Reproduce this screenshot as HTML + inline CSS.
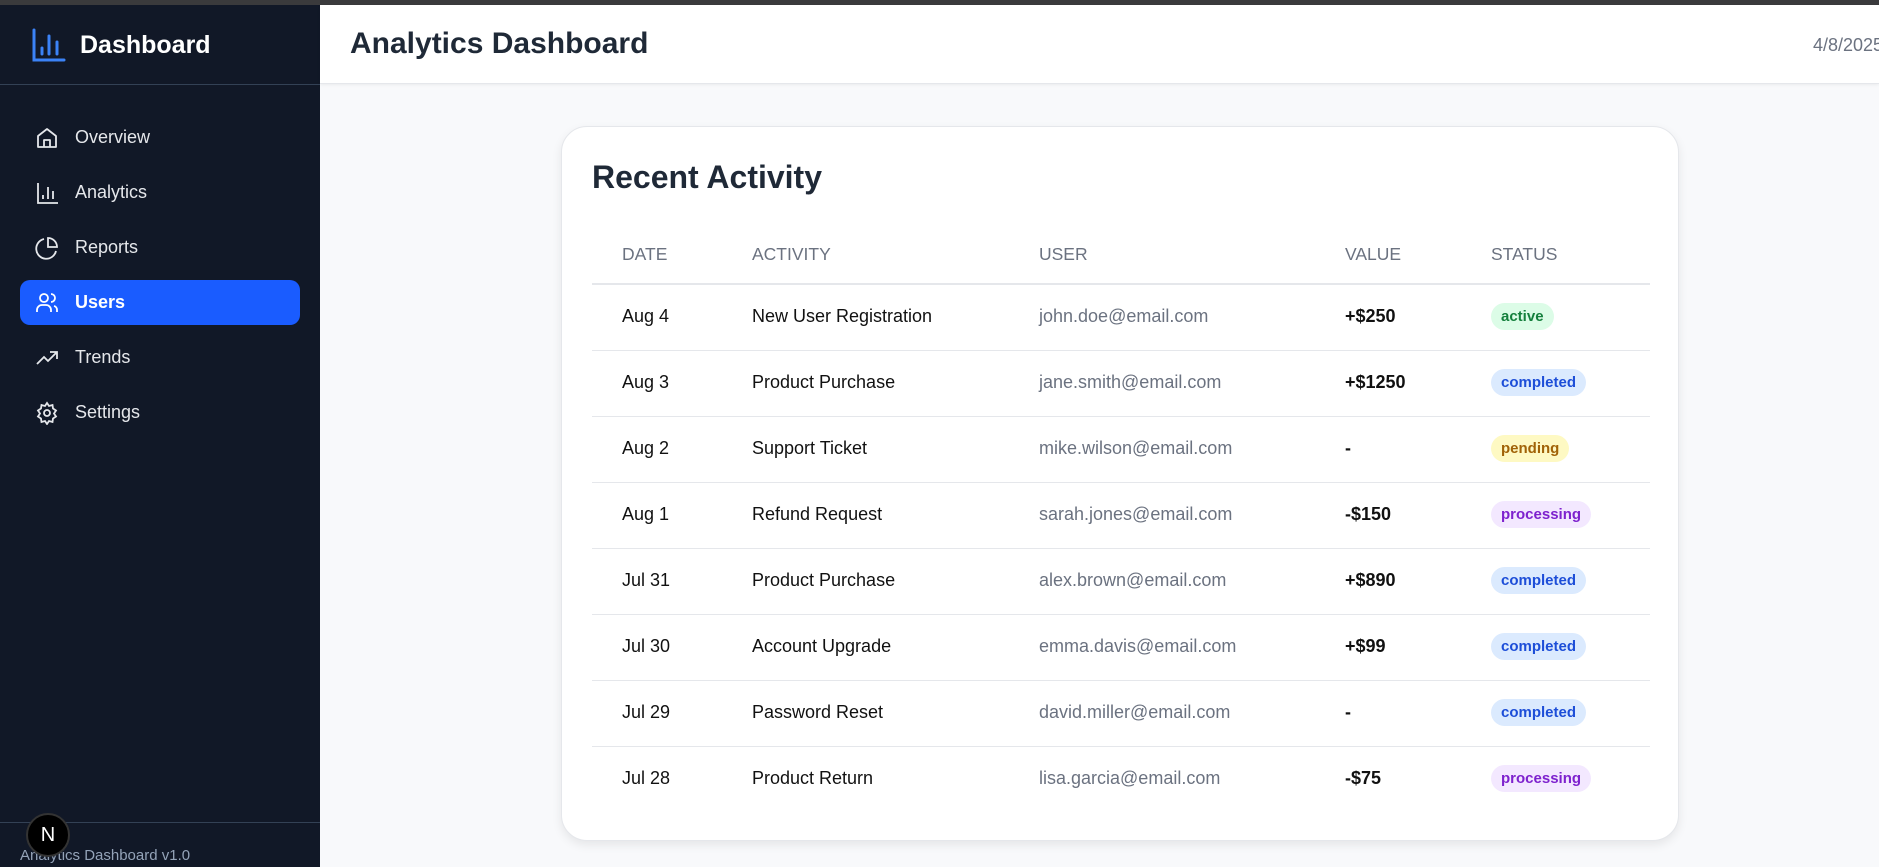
<!DOCTYPE html>
<html><head><meta charset="utf-8"><style>
*{box-sizing:border-box;margin:0;padding:0}
body{width:1879px;height:867px;overflow:hidden;font-family:"Liberation Sans",Arial,sans-serif;background:#f8f9fb;position:relative}
.topbar{position:absolute;left:0;top:0;width:1879px;height:5px;background:#3a3a3c}
.side{position:absolute;left:0;top:5px;width:320px;height:862px;background:#111827}
.logo{position:absolute;left:32px;top:23px;display:flex;align-items:center}
.logo span{color:#fff;font-weight:bold;font-size:25px;margin-left:14px}
.div1{position:absolute;left:0;top:79px;width:320px;height:1px;background:#334155}
.nav{position:absolute;left:20px;width:280px;height:45px;border-radius:10px;display:flex;align-items:center;padding-left:15px;color:#e5e7eb;font-size:18px}
.nav svg{margin-right:16px}
.nav.act{background:#1a5cff;color:#fff;font-weight:bold}
.div2{position:absolute;left:0;top:817px;width:320px;height:1px;background:#334155}
.ver{position:absolute;left:20px;top:842px;color:#94a3b8;font-size:15px}
.nbtn{position:absolute;left:26px;top:813px;width:44px;height:44px;border-radius:50%;background:#000;border:2px solid #333;color:#fff;font-size:20px;display:flex;align-items:center;justify-content:center}
.header{position:absolute;left:320px;top:5px;width:1559px;height:79px;background:#fff;border-bottom:1px solid #e5e7eb;box-shadow:0 1px 3px rgba(0,0,0,.06)}
.header h1{position:absolute;left:30px;top:22px;font-size:30px;color:#1f2937;font-weight:bold}
.date{position:absolute;left:1493px;top:30px;font-size:18px;color:#6b7280}
.card{position:absolute;left:561px;top:126px;width:1118px;height:715px;background:#fff;border:1px solid #e5e7eb;border-radius:26px;box-shadow:0 4px 10px rgba(0,0,0,.08)}
.card h2{position:absolute;left:30px;top:32px;font-size:32px;color:#1f2937;font-weight:bold}
table{position:absolute;left:30px;top:108px;width:1058px;border-collapse:collapse}
th{height:49px;padding-bottom:9px;text-align:left;font-weight:normal;color:#6b7280;font-size:17.5px;border-bottom:2px solid #e5e7eb;vertical-align:middle}
td{height:66px;padding-bottom:2px;font-size:18px;color:#111;border-bottom:1px solid #e5e7eb;vertical-align:middle}
tr:last-child td{border-bottom:none}
.c1{padding-left:30px;width:160px}.c2{width:287px}.c3{width:306px}.c4{width:146px}
td.c3{color:#6b7280}td.c4{font-weight:bold}
.b{display:inline-block;padding:5px 10px;border-radius:14px;font-size:15px;font-weight:bold}
.active{background:#dcfce7;color:#15803d}.completed{background:#dbeafe;color:#1d4ed8}.pending{background:#fef9c3;color:#a16207}.processing{background:#f3e8ff;color:#7e22ce}
</style></head><body>
<div class="topbar"></div>
<div class="side">
<div class="logo"><svg width="34" height="34" viewBox="0 0 34 34" fill="none" stroke="#3b82f6" stroke-width="3" stroke-linecap="round"><path d="M2 2v30h30"/><path d="M10 26v-6M17 26V8M25 26V14"/></svg><span>Dashboard</span></div>
<div class="div1"></div>
<div class="nav" style="top:110px"><svg width="24" height="24" viewBox="0 0 24 24" fill="none" stroke="#e5e7eb" stroke-width="1.8" stroke-linejoin="round"><path d="M3 10l9-7 9 7v11H3z"/><path d="M9 21v-7h6v7"/></svg>Overview</div>
<div class="nav" style="top:165px"><svg width="24" height="24" viewBox="0 0 24 24" fill="none" stroke="#e5e7eb" stroke-width="1.8"><path d="M3 2v20h20M8 18v-4M13 18V6M18 18v-8"/></svg>Analytics</div>
<div class="nav" style="top:220px"><svg width="24" height="24" viewBox="0 0 24 24" fill="none" stroke="#e5e7eb" stroke-width="1.8"><path d="M21 15A10 10 0 1 1 9 3"/><path d="M13 2a9 9 0 0 1 9 9h-9z"/></svg>Reports</div>
<div class="nav act" style="top:275px"><svg width="24" height="24" viewBox="0 0 24 24" fill="none" stroke="#fff" stroke-width="1.8"><circle cx="9" cy="7" r="4"/><path d="M2 21v-2a5 5 0 0 1 5-5h4a5 5 0 0 1 5 5v2M16 3a4 4 0 0 1 0 8M22 21v-2a4 4 0 0 0-3-4"/></svg>Users</div>
<div class="nav" style="top:330px"><svg width="24" height="24" viewBox="0 0 24 24" fill="none" stroke="#e5e7eb" stroke-width="1.8"><path d="M2 18l7-7 4 4 9-9M15 6h7v7"/></svg>Trends</div>
<div class="nav" style="top:385px"><svg width="24" height="24" viewBox="0 0 24 24" fill="none" stroke="#e5e7eb" stroke-width="1.8"><circle cx="12" cy="12" r="3"/><path d="M12 2l2 3 3.5-1 .5 3.5 3 2-2 3 2 3-3 2-.5 3.5-3.5-1-2 3-2-3-3.5 1L6 17.5l-3-2 2-3-2-3 3-2 .5-3.5 3.5 1z"/></svg>Settings</div>
<div class="div2"></div>
<div class="ver">Analytics Dashboard v1.0</div>
</div>
<div class="nbtn">N</div>
<div class="header"><h1>Analytics Dashboard</h1><div class="date">4/8/2025</div></div>
<div class="card"><h2>Recent Activity</h2>
<table>
<tr><th class="c1">DATE</th><th class="c2">ACTIVITY</th><th class="c3">USER</th><th class="c4">VALUE</th><th>STATUS</th></tr>
<tr><td class="c1">Aug 4</td><td class="c2">New User Registration</td><td class="c3">john.doe@email.com</td><td class="c4">+$250</td><td><span class="b active">active</span></td></tr>
<tr><td class="c1">Aug 3</td><td class="c2">Product Purchase</td><td class="c3">jane.smith@email.com</td><td class="c4">+$1250</td><td><span class="b completed">completed</span></td></tr>
<tr><td class="c1">Aug 2</td><td class="c2">Support Ticket</td><td class="c3">mike.wilson@email.com</td><td class="c4">-</td><td><span class="b pending">pending</span></td></tr>
<tr><td class="c1">Aug 1</td><td class="c2">Refund Request</td><td class="c3">sarah.jones@email.com</td><td class="c4">-$150</td><td><span class="b processing">processing</span></td></tr>
<tr><td class="c1">Jul 31</td><td class="c2">Product Purchase</td><td class="c3">alex.brown@email.com</td><td class="c4">+$890</td><td><span class="b completed">completed</span></td></tr>
<tr><td class="c1">Jul 30</td><td class="c2">Account Upgrade</td><td class="c3">emma.davis@email.com</td><td class="c4">+$99</td><td><span class="b completed">completed</span></td></tr>
<tr><td class="c1">Jul 29</td><td class="c2">Password Reset</td><td class="c3">david.miller@email.com</td><td class="c4">-</td><td><span class="b completed">completed</span></td></tr>
<tr><td class="c1">Jul 28</td><td class="c2">Product Return</td><td class="c3">lisa.garcia@email.com</td><td class="c4">-$75</td><td><span class="b processing">processing</span></td></tr>
</table></div>
</body></html>
